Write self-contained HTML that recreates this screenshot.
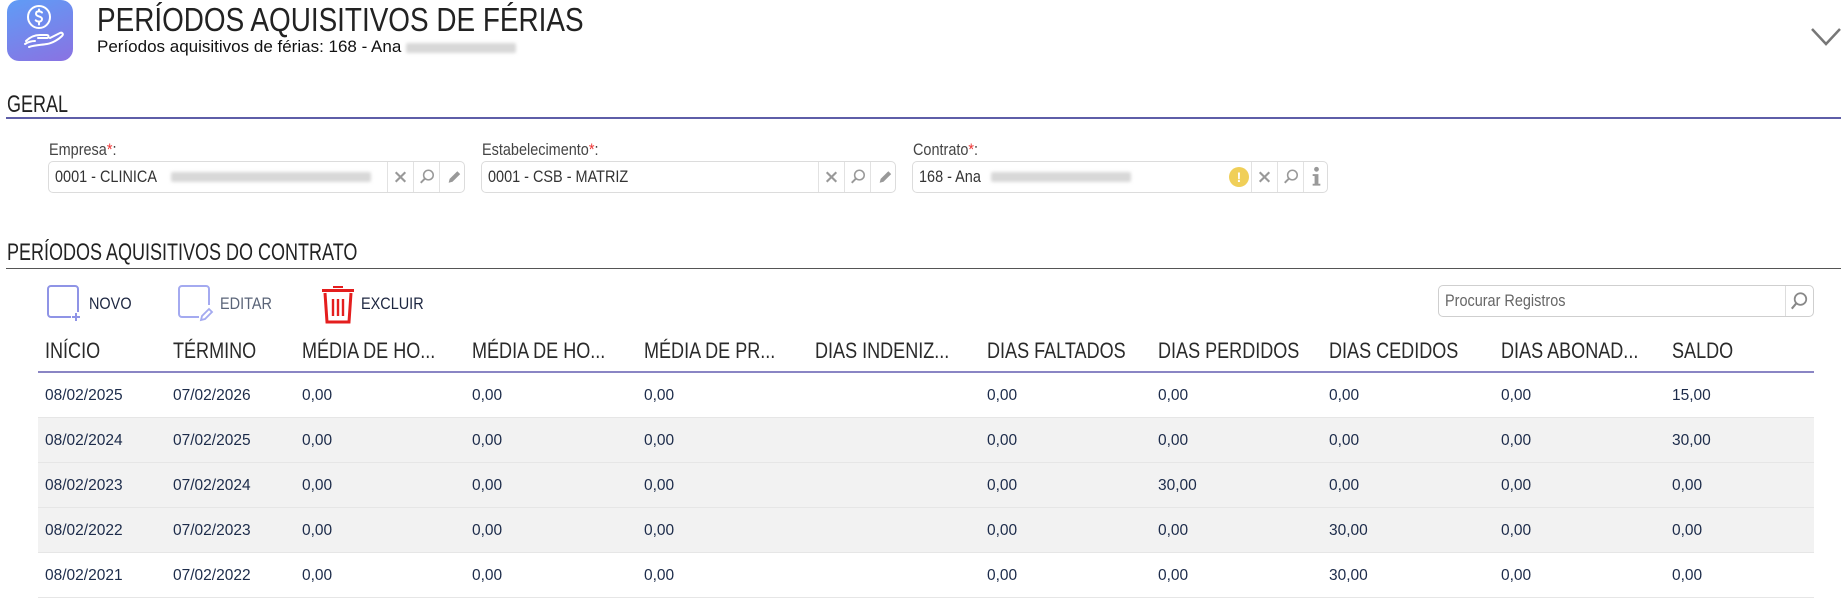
<!DOCTYPE html>
<html><head><meta charset="utf-8"><style>
*{margin:0;padding:0;box-sizing:border-box}
body{width:1843px;height:608px;background:#fff;position:relative;overflow:hidden;font-family:"Liberation Sans",Arial,sans-serif;color:#222}
.a{position:absolute;white-space:nowrap}
.c{display:inline-block;transform-origin:left center}
.blur{display:inline-block;background:#d8d8d8;height:10px;border-radius:2px;filter:blur(1.5px);vertical-align:middle}
.field{position:absolute;top:161px;height:32px;border:1px solid #dcdcdc;border-radius:5px;background:#fff}
.field .t{position:absolute;left:6px;top:0;line-height:30px;font-size:17px;color:#333}
.btn{position:absolute;top:0;width:26px;height:30px;border-left:1px solid #e2e2e2}
.lbl{font-size:17px;color:#444}
.lbl b{color:#e33;font-weight:normal}
.hd{position:absolute;top:336px;font-size:22px;color:#2a2a2a;line-height:30px}
.hd span{display:inline-block;transform:scaleX(.82);transform-origin:left center}
.row{position:absolute;left:38px;width:1776px;height:45px;border-bottom:1px solid #e6e6e6}
.row div{position:absolute;top:0;line-height:45px;font-size:15.5px;color:#1c2b4a}
</style></head><body>

<div class="a" style="left:7px;top:0;width:66px;height:61px;border-radius:12px;background:linear-gradient(160deg,#5f9cf6,#8a72e2)">
<svg width="66" height="61" viewBox="0 0 66 61" fill="none" stroke="#fff" stroke-width="2" stroke-linecap="round">
<circle cx="32" cy="17" r="11"/>
<path d="M35 12.5c-1-1-2-1.3-3-1.3-2 0-3 1-3 2.5 0 3.5 6 2 6 5.3 0 1.5-1.2 2.6-3 2.6-1.3 0-2.5-.5-3.3-1.3M32 9.5v2M32 22.5v2"/>
<path d="M19 41c4-4 9-6 14-6h7c2 0 2 3 0 3h-9M22 47c6-2 12-2 18-3 6-1 12-5 15-8 2-2 0-4-2-3l-10 5M18 44c3-2 6-3 10-3"/>
</svg></div>

<div class="a" style="left:97px;top:2px;font-size:33px;line-height:36px"><span class="c" style="transform:scaleX(.845)">PERÍODOS AQUISITIVOS DE FÉRIAS</span></div>
<div class="a" style="left:97px;top:37px;font-size:17px;line-height:19px;color:#111">Períodos aquisitivos de férias: 168 - Ana <span class="blur" style="width:110px"></span></div>

<svg class="a" style="left:1810px;top:27px" width="32" height="20" viewBox="0 0 32 20"><path d="M2 2l14 15L30 2" fill="none" stroke="#777" stroke-width="2.5"/></svg>

<div class="a" style="left:7px;top:92px;font-size:24px;line-height:26px"><span class="c" style="transform:scaleX(.75)">GERAL</span></div>
<div class="a" style="left:6px;top:117px;width:1835px;height:2px;background:#5e5ea8"></div>

<div class="a lbl" style="left:49px;top:140px"><span class="c" style="transform:scaleX(.85)">Empresa<b>*</b>:</span></div>
<div class="a lbl" style="left:482px;top:140px"><span class="c" style="transform:scaleX(.85)">Estabelecimento<b>*</b>:</span></div>
<div class="a lbl" style="left:913px;top:140px"><span class="c" style="transform:scaleX(.85)">Contrato<b>*</b>:</span></div>

<svg width="0" height="0" style="position:absolute"><defs>
<g id="x"><path d="M8 10l10 10M18 10L8 20" stroke="#999" stroke-width="2.2"/></g>
<g id="s"><circle cx="15" cy="13" r="5" fill="none" stroke="#999" stroke-width="1.6"/><path d="M11.5 16.5L7 21" stroke="#999" stroke-width="2"/></g>
<g id="p"><path d="M9 21l1-4 8-8 3 3-8 8z" fill="#999"/></g>
</defs></svg>

<div class="field" style="left:48px;width:417px"><div class="t"><span class="c" style="transform:scaleX(.85)">0001 - CLINICA</span></div><span class="a blur" style="left:122px;top:10px;width:200px"></span>
<svg class="btn" style="left:338px" viewBox="0 0 26 30"><use href="#x"/></svg>
<svg class="btn" style="left:364px" viewBox="0 0 26 30"><use href="#s"/></svg>
<svg class="btn" style="left:390px" viewBox="0 0 26 30"><use href="#p"/></svg></div>

<div class="field" style="left:481px;width:415px"><div class="t"><span class="c" style="transform:scaleX(.85)">0001 - CSB - MATRIZ</span></div>
<svg class="btn" style="left:336px" viewBox="0 0 26 30"><use href="#x"/></svg>
<svg class="btn" style="left:362px" viewBox="0 0 26 30"><use href="#s"/></svg>
<svg class="btn" style="left:388px" viewBox="0 0 26 30"><use href="#p"/></svg></div>

<div class="field" style="left:912px;width:416px"><div class="t"><span class="c" style="transform:scaleX(.85)">168 - Ana</span></div><span class="a blur" style="left:78px;top:10px;width:140px"></span>
<div class="a" style="left:316px;top:5px;width:20px;height:20px;border-radius:50%;background:#f0cf58;color:#fff;font-size:14px;font-weight:bold;text-align:center;line-height:20px">!</div>
<svg class="btn" style="left:338px" viewBox="0 0 26 30"><use href="#x"/></svg>
<svg class="btn" style="left:364px" viewBox="0 0 26 30"><use href="#s"/></svg>
<svg class="btn" style="left:390px" viewBox="0 0 26 30"><circle cx="13" cy="7" r="2.5" fill="#999"/><path d="M9 12h6v10h2v2H9v-2h2v-8H9z" fill="#999"/></svg></div>

<div class="a" style="left:7px;top:240px;font-size:24px;line-height:26px"><span class="c" style="transform:scaleX(.75)">PERÍODOS AQUISITIVOS DO CONTRATO</span></div>
<div class="a" style="left:6px;top:268px;width:1835px;height:1px;background:#555"></div>

<svg class="a" style="left:47px;top:285px" width="36" height="38" viewBox="0 0 36 38"><rect x="1" y="1" width="30" height="31" rx="3" fill="none" stroke="#8f94e6" stroke-width="2"/><rect x="24" y="27" width="10" height="10" fill="#fff"/><path d="M29 28v8M25 32h8" stroke="#8f94e6" stroke-width="2"/></svg>
<div class="a" style="left:89px;top:292px;font-size:17px;line-height:24px;color:#1c2640"><span class="c" style="transform:scaleX(.85)">NOVO</span></div>
<svg class="a" style="left:178px;top:285px" width="36" height="38" viewBox="0 0 36 38"><rect x="1" y="1" width="30" height="31" rx="3" fill="none" stroke="#a4aaf0" stroke-width="2"/><rect x="21" y="20" width="14" height="17" fill="#fff"/><path d="M23 35l1-4 7-7 3 3-7 7z" fill="none" stroke="#a4aaf0" stroke-width="1.8"/></svg>
<div class="a" style="left:220px;top:292px;font-size:17px;line-height:24px;color:#5a6478"><span class="c" style="transform:scaleX(.85)">EDITAR</span></div>
<svg class="a" style="left:320px;top:284px" width="36" height="40" viewBox="0 0 36 40"><path d="M13 4V2h10v2M2 5h32v3H2z" fill="#e41e1e"/><path d="M5 9l2 29h22l2-29" fill="none" stroke="#e41e1e" stroke-width="3"/><path d="M13 15v17M18 15v17M23 15v17" stroke="#e41e1e" stroke-width="2.4"/></svg>
<div class="a" style="left:361px;top:292px;font-size:17px;line-height:24px;color:#1c2640"><span class="c" style="transform:scaleX(.85)">EXCLUIR</span></div>

<div class="a" style="left:1438px;top:285px;width:376px;height:32px;border:1px solid #cfcfcf;border-radius:5px">
<div class="a" style="left:6px;top:0;line-height:30px;font-size:17px;color:#666"><span class="c" style="transform:scaleX(.85)">Procurar Registros</span></div>
<svg class="a" style="right:0;top:0;border-left:1px solid #ddd" width="28" height="30" viewBox="0 0 28 30"><circle cx="15" cy="13" r="6" fill="none" stroke="#888" stroke-width="1.8"/><path d="M11 17l-5 6" stroke="#888" stroke-width="2.2"/></svg></div>

<div class="hd" style="left:45px"><span>INÍCIO</span></div>
<div class="hd" style="left:173px"><span>TÉRMINO</span></div>
<div class="hd" style="left:302px"><span>MÉDIA DE HO...</span></div>
<div class="hd" style="left:472px"><span>MÉDIA DE HO...</span></div>
<div class="hd" style="left:644px"><span>MÉDIA DE PR...</span></div>
<div class="hd" style="left:815px"><span>DIAS INDENIZ...</span></div>
<div class="hd" style="left:987px"><span>DIAS FALTADOS</span></div>
<div class="hd" style="left:1158px"><span>DIAS PERDIDOS</span></div>
<div class="hd" style="left:1329px"><span>DIAS CEDIDOS</span></div>
<div class="hd" style="left:1501px"><span>DIAS ABONAD...</span></div>
<div class="hd" style="left:1672px"><span>SALDO</span></div>
<div class="a" style="left:38px;top:371px;width:1776px;height:2px;background:#8a85c4"></div>

<div class="row" style="top:373px"><div style="left:7px">08/02/2025</div><div style="left:135px">07/02/2026</div><div style="left:264px">0,00</div><div style="left:434px">0,00</div><div style="left:606px">0,00</div><div style="left:949px">0,00</div><div style="left:1120px">0,00</div><div style="left:1291px">0,00</div><div style="left:1463px">0,00</div><div style="left:1634px">15,00</div></div>
<div class="row" style="top:418px;background:#f2f2f2"><div style="left:7px">08/02/2024</div><div style="left:135px">07/02/2025</div><div style="left:264px">0,00</div><div style="left:434px">0,00</div><div style="left:606px">0,00</div><div style="left:949px">0,00</div><div style="left:1120px">0,00</div><div style="left:1291px">0,00</div><div style="left:1463px">0,00</div><div style="left:1634px">30,00</div></div>
<div class="row" style="top:463px;background:#f2f2f2"><div style="left:7px">08/02/2023</div><div style="left:135px">07/02/2024</div><div style="left:264px">0,00</div><div style="left:434px">0,00</div><div style="left:606px">0,00</div><div style="left:949px">0,00</div><div style="left:1120px">30,00</div><div style="left:1291px">0,00</div><div style="left:1463px">0,00</div><div style="left:1634px">0,00</div></div>
<div class="row" style="top:508px;background:#f2f2f2"><div style="left:7px">08/02/2022</div><div style="left:135px">07/02/2023</div><div style="left:264px">0,00</div><div style="left:434px">0,00</div><div style="left:606px">0,00</div><div style="left:949px">0,00</div><div style="left:1120px">0,00</div><div style="left:1291px">30,00</div><div style="left:1463px">0,00</div><div style="left:1634px">0,00</div></div>
<div class="row" style="top:553px"><div style="left:7px">08/02/2021</div><div style="left:135px">07/02/2022</div><div style="left:264px">0,00</div><div style="left:434px">0,00</div><div style="left:606px">0,00</div><div style="left:949px">0,00</div><div style="left:1120px">0,00</div><div style="left:1291px">30,00</div><div style="left:1463px">0,00</div><div style="left:1634px">0,00</div></div>
</body></html>
